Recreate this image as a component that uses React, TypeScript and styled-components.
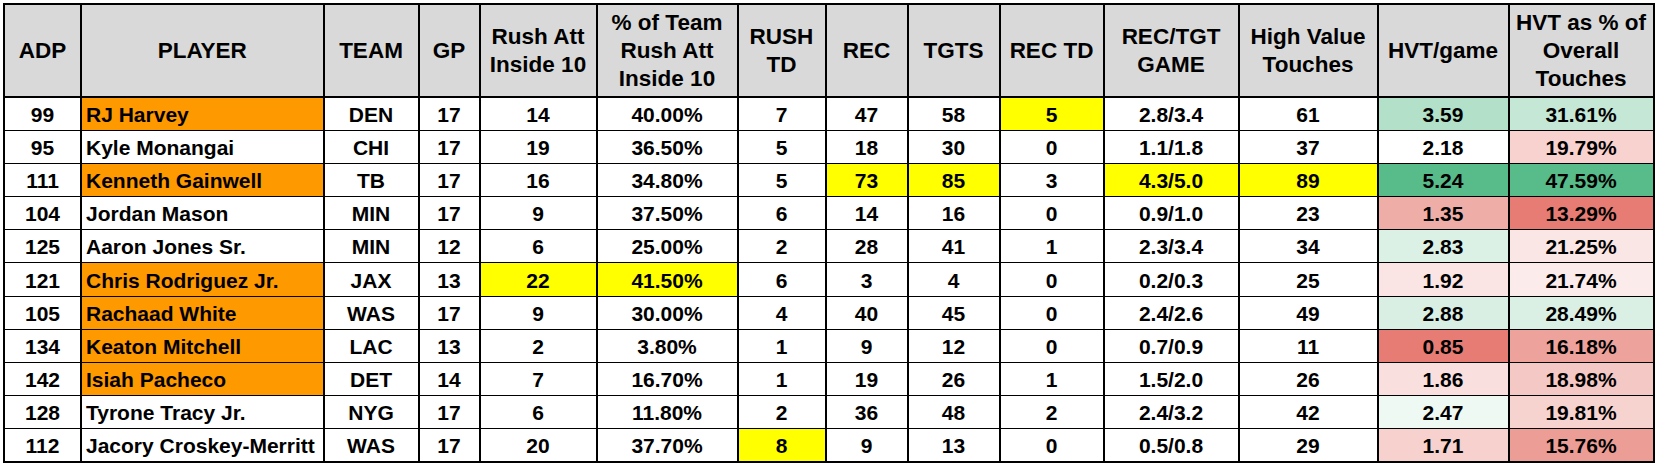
import React from 'react';
import styled, { createGlobalStyle } from 'styled-components';

// ── Global ────────────────────────────────────────────────────────────────

const GlobalStyle = createGlobalStyle`
  html, body {
    margin: 0;
    padding: 0;
    background: #ffffff;
  }
  body {
    font-family: "Liberation Sans", Arial, sans-serif;
    color: #000;
  }
`;

// ── Styled components ─────────────────────────────────────────────────────

const Sheet = styled.div`
  padding: 3px 0 0 3px;
`;

const Table = styled.table`
  border-collapse: collapse;
  table-layout: fixed;
  width: 1650px;
  border: 2px solid #000;
  font-family: "Liberation Sans", Arial, sans-serif;
  font-weight: 700;
  font-size: 21px;
`;

const HeadRow = styled.tr`
  height: 93px;
`;

const HeadCell = styled.th`
  background: #d9d9d9;
  border-left: 2px solid #000;
  border-right: 2px solid #000;
  border-bottom: 2px solid #000;
  padding: 0 2px;
  text-align: center;
  vertical-align: middle;
  font-size: 22.5px;
  line-height: 28px;
  font-weight: 700;
  white-space: nowrap;
`;

const BodyRow = styled.tr`
  height: 33.2px;
`;

const Cell = styled.td<{ $bg?: string; $align?: 'left' | 'center' }>`
  background: ${({ $bg }) => $bg ?? '#ffffff'};
  border-left: 2px solid #000;
  border-right: 2px solid #000;
  border-top: 1px solid #000;
  border-bottom: 1px solid #000;
  padding: 2px ${({ $align }) => ($align === 'left' ? '4px' : '2px')} 0;
  text-align: ${({ $align }) => $align ?? 'center'};
  vertical-align: middle;
  line-height: 24px;
  white-space: nowrap;
  overflow: hidden;
`;

// ── Data ──────────────────────────────────────────────────────────────────

const ORANGE = '#ff9900';
const YELLOW = '#ffff00';

const COL_WIDTHS = [77, 242.5, 95, 61, 117, 141, 88, 82, 92, 104, 135, 139, 131, 145];

const HEADERS: string[][] = [
  ['ADP'],
  ['PLAYER'],
  ['TEAM'],
  ['GP'],
  ['Rush Att', 'Inside 10'],
  ['% of Team', 'Rush Att', 'Inside 10'],
  ['RUSH', 'TD'],
  ['REC'],
  ['TGTS'],
  ['REC TD'],
  ['REC/TGT', 'GAME'],
  ['High Value', 'Touches'],
  ['HVT/game'],
  ['HVT as % of', 'Overall', 'Touches'],
];

interface Row {
  adp: number;
  player: string;
  team: string;
  gp: number;
  rushIn10: number;
  teamPct: string;
  rushTd: number;
  rec: number;
  tgts: number;
  recTd: number;
  recTgt: string;
  hvt: number;
  hvtGame: number;
  hvtPct: number;
  rookie?: boolean;
  hl?: number[]; // column indexes highlighted yellow
}

const ROWS: Row[] = [
  { adp: 99, player: 'RJ Harvey', team: 'DEN', gp: 17, rushIn10: 14, teamPct: '40.00%', rushTd: 7, rec: 47, tgts: 58, recTd: 5, recTgt: '2.8/3.4', hvt: 61, hvtGame: 3.59, hvtPct: 31.61, rookie: true, hl: [9] },
  { adp: 95, player: 'Kyle Monangai', team: 'CHI', gp: 17, rushIn10: 19, teamPct: '36.50%', rushTd: 5, rec: 18, tgts: 30, recTd: 0, recTgt: '1.1/1.8', hvt: 37, hvtGame: 2.18, hvtPct: 19.79 },
  { adp: 111, player: 'Kenneth Gainwell', team: 'TB', gp: 17, rushIn10: 16, teamPct: '34.80%', rushTd: 5, rec: 73, tgts: 85, recTd: 3, recTgt: '4.3/5.0', hvt: 89, hvtGame: 5.24, hvtPct: 47.59, rookie: true, hl: [7, 8, 10, 11] },
  { adp: 104, player: 'Jordan Mason', team: 'MIN', gp: 17, rushIn10: 9, teamPct: '37.50%', rushTd: 6, rec: 14, tgts: 16, recTd: 0, recTgt: '0.9/1.0', hvt: 23, hvtGame: 1.35, hvtPct: 13.29 },
  { adp: 125, player: 'Aaron Jones Sr.', team: 'MIN', gp: 12, rushIn10: 6, teamPct: '25.00%', rushTd: 2, rec: 28, tgts: 41, recTd: 1, recTgt: '2.3/3.4', hvt: 34, hvtGame: 2.83, hvtPct: 21.25 },
  { adp: 121, player: 'Chris Rodriguez Jr.', team: 'JAX', gp: 13, rushIn10: 22, teamPct: '41.50%', rushTd: 6, rec: 3, tgts: 4, recTd: 0, recTgt: '0.2/0.3', hvt: 25, hvtGame: 1.92, hvtPct: 21.74, rookie: true, hl: [4, 5] },
  { adp: 105, player: 'Rachaad White', team: 'WAS', gp: 17, rushIn10: 9, teamPct: '30.00%', rushTd: 4, rec: 40, tgts: 45, recTd: 0, recTgt: '2.4/2.6', hvt: 49, hvtGame: 2.88, hvtPct: 28.49, rookie: true },
  { adp: 134, player: 'Keaton Mitchell', team: 'LAC', gp: 13, rushIn10: 2, teamPct: '3.80%', rushTd: 1, rec: 9, tgts: 12, recTd: 0, recTgt: '0.7/0.9', hvt: 11, hvtGame: 0.85, hvtPct: 16.18, rookie: true },
  { adp: 142, player: 'Isiah Pacheco', team: 'DET', gp: 14, rushIn10: 7, teamPct: '16.70%', rushTd: 1, rec: 19, tgts: 26, recTd: 1, recTgt: '1.5/2.0', hvt: 26, hvtGame: 1.86, hvtPct: 18.98, rookie: true },
  { adp: 128, player: 'Tyrone Tracy Jr.', team: 'NYG', gp: 17, rushIn10: 6, teamPct: '11.80%', rushTd: 2, rec: 36, tgts: 48, recTd: 2, recTgt: '2.4/3.2', hvt: 42, hvtGame: 2.47, hvtPct: 19.81 },
  { adp: 112, player: 'Jacory Croskey-Merritt', team: 'WAS', gp: 17, rushIn10: 20, teamPct: '37.70%', rushTd: 8, rec: 9, tgts: 13, recTd: 0, recTgt: '0.5/0.8', hvt: 29, hvtGame: 1.71, hvtPct: 15.76, hl: [6] },
];

// ── Colour scale (red → white → green) ────────────────────────────────────

const LOW = [230, 124, 115];
const HIGH = [87, 187, 138];

function scaleColor(v: number, min: number, mid: number, max: number): string {
  const target = v < mid ? LOW : HIGH;
  const t = v < mid ? (mid - v) / (mid - min) : (v - mid) / (max - mid);
  const c = target.map(ch => Math.round(255 - Math.min(1, Math.max(0, t)) * (255 - ch)));
  return `rgb(${c[0]}, ${c[1]}, ${c[2]})`;
}

const gameVals = ROWS.map(r => r.hvtGame);
const pctVals = ROWS.map(r => r.hvtPct);
const sorted = [...gameVals].sort((a, b) => a - b);
const GAME_MID = sorted[Math.floor(sorted.length / 2)];
const PCT_MID = pctVals.reduce((s, v) => s + v, 0) / pctVals.length;

// ── App ───────────────────────────────────────────────────────────────────

const App: React.FC = () => (
  <>
    <GlobalStyle />
    <Sheet>
      <Table>
        <colgroup>
          {COL_WIDTHS.map((w, i) => (
            <col key={i} style={{ width: w }} />
          ))}
        </colgroup>
        <thead>
          <HeadRow>
            {HEADERS.map((lines, i) => (
              <HeadCell key={i}>
                {lines.map((l, j) => (
                  <React.Fragment key={j}>
                    {j > 0 && <br />}
                    {l}
                  </React.Fragment>
                ))}
              </HeadCell>
            ))}
          </HeadRow>
        </thead>
        <tbody>
          {ROWS.map(r => {
            const y = (i: number) => (r.hl?.includes(i) ? YELLOW : undefined);
            return (
              <BodyRow key={r.adp}>
                <Cell>{r.adp}</Cell>
                <Cell $align="left" $bg={r.rookie ? ORANGE : undefined}>{r.player}</Cell>
                <Cell>{r.team}</Cell>
                <Cell>{r.gp}</Cell>
                <Cell $bg={y(4)}>{r.rushIn10}</Cell>
                <Cell $bg={y(5)}>{r.teamPct}</Cell>
                <Cell $bg={y(6)}>{r.rushTd}</Cell>
                <Cell $bg={y(7)}>{r.rec}</Cell>
                <Cell $bg={y(8)}>{r.tgts}</Cell>
                <Cell $bg={y(9)}>{r.recTd}</Cell>
                <Cell $bg={y(10)}>{r.recTgt}</Cell>
                <Cell $bg={y(11)}>{r.hvt}</Cell>
                <Cell $bg={scaleColor(r.hvtGame, Math.min(...gameVals), GAME_MID, Math.max(...gameVals))}>
                  {r.hvtGame.toFixed(2)}
                </Cell>
                <Cell $bg={scaleColor(r.hvtPct, Math.min(...pctVals), PCT_MID, Math.max(...pctVals))}>
                  {r.hvtPct.toFixed(2)}%
                </Cell>
              </BodyRow>
            );
          })}
        </tbody>
      </Table>
    </Sheet>
  </>
);

export default App;
